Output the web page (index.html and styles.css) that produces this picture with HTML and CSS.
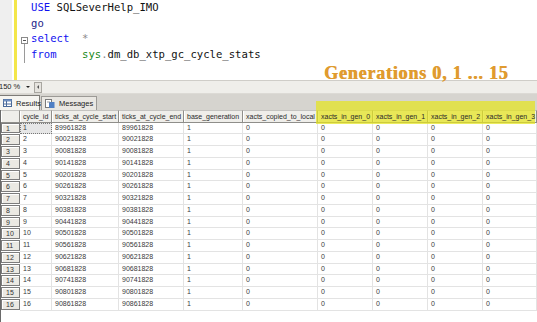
FILE: index.html
```html
<!DOCTYPE html>
<html lang="en">
<head>
    <meta charset="UTF-8">
    <title>dm_db_xtp_gc_cycle_stats</title>
    <link rel="stylesheet" href="styles.css">
</head>
<body>
    <div class="screen">
        <div class="editor">
            <div class="gutter"></div>
            <div class="changebar"></div>
            <div class="fold">
                <div class="fold-box"></div>
                <div class="fold-line"></div>
            </div>
<pre class="code"><span class="kw">USE</span> SQLSeverHelp_IMO
<span class="go">go</span>
<span class="kw">select</span>  <span class="op">*</span>
<span class="kw">from</span>    <span class="sys">sys</span><span class="op">.</span>dm_db_xtp_gc_cycle_stats</pre>
            <div class="note">Generations 0, 1 ... 15</div>
        </div>

        <div class="zoombar">
            <div class="zoom-combo">150 %<span class="arrow"></span></div>
            <div class="scroll-btn"><span class="tri"></span></div>
        </div>

        <div class="tabs">
            <div class="tab active">
                <svg width="9" height="8" viewBox="0 0 9 8">
                    <rect x="0.5" y="0.5" width="8" height="7" fill="#fff" stroke="#4a6a9a"/>
                    <rect x="0.5" y="0.5" width="8" height="2" fill="#6f8fc0"/>
                    <line x1="3.5" y1="2" x2="3.5" y2="8" stroke="#4a6a9a"/>
                    <line x1="0" y1="5" x2="9" y2="5" stroke="#4a6a9a"/>
                </svg>
                Results
            </div>
            <div class="tab">
                <svg width="10" height="9" viewBox="0 0 10 9">
                    <rect x="0.5" y="0.5" width="6" height="8" fill="#fff" stroke="#7a7a7a"/>
                    <rect x="4" y="3" width="5.5" height="6" fill="#4f7fc4"/>
                    <line x1="2" y1="3" x2="5" y2="3" stroke="#9a9a9a"/>
                </svg>
                Messages
            </div>
        </div>

        <div class="grid" id="grid">
            <div class="row head">
                <div class="cell"></div>
                <div class="cell"><span>cycle_id</span></div>
                <div class="cell"><span>ticks_at_cycle_start</span></div>
                <div class="cell"><span>ticks_at_cycle_end</span></div>
                <div class="cell"><span>base_generation</span></div>
                <div class="cell"><span>xacts_copied_to_local</span></div>
                <div class="cell"><span>xacts_in_gen_0</span></div>
                <div class="cell"><span>xacts_in_gen_1</span></div>
                <div class="cell"><span>xacts_in_gen_2</span></div>
                <div class="cell"><span>xacts_in_gen_3</span></div>
            </div>
        </div>

        <div class="highlight"></div>
    </div>

    <script>
        const grid = document.getElementById('grid');

        for (let i = 1; i <= 16; i++) {
            const ticks = 89961828 + (i - 1) * 60000;
            const row = document.createElement('div');
            row.className = 'row';
            row.innerHTML = `
                <div class="cell rowhead"><span class="btn">${i}</span></div>
                <div class="cell${i === 1 ? ' current' : ''}">${i}</div>
                <div class="cell">${ticks}</div>
                <div class="cell">${ticks}</div>
                <div class="cell">1</div>
                <div class="cell">0</div>
                <div class="cell">0</div>
                <div class="cell">0</div>
                <div class="cell">0</div>
                <div class="cell">0</div>
            `;
            grid.appendChild(row);
        }
    </script>
</body>
</html>
```

FILE: styles.css
```css
body {
    margin: 0;
    background: #fff;
}
.screen {
    position: relative;
    width: 537px;
    height: 322px;
    overflow: hidden;
}
.editor {
    position: relative;
    display: flex;
    height: 80px;
    background: #fff;
}
.gutter {
    width: 12px;
    background: #efefef;
    margin-right: 2px;
}
.changebar {
    width: 3px;
    background: #f3e64a;
}
.fold {
    width: 14px;
    padding-top: 37px;
    box-sizing: border-box;
}
.fold-box {
    position: relative;
    width: 5px;
    height: 5px;
    margin-left: 4px;
    border: 1px solid #8a8a8a;
    background: #fff;
}
.fold-box::after {
    content: "";
    position: absolute;
    left: 1px;
    top: 2px;
    width: 3px;
    height: 1px;
    background: #555;
}
.fold-line {
    width: 1px;
    height: 19px;
    margin-left: 7px;
    background: #9a9a9a;
}
.code {
    margin: 0;
    font-family: "DejaVu Sans Mono", "Liberation Mono", monospace;
    font-size: 10.6px;
    line-height: 15.5px;
    color: #111;
}
.kw {
    color: #1010f0;
}
.go {
    color: #24248a;
}
.op {
    color: #8a8a8a;
}
.sys {
    color: #1a8a1a;
}
.note {
    position: absolute;
    left: 324px;
    top: 64px;
    font-family: "Liberation Serif", serif;
    font-weight: bold;
    font-size: 18px;
    line-height: 18px;
    letter-spacing: 0.8px;
    color: #e09b2f;
    text-shadow: 0.6px 0 0 #e09b2f;
}
.zoombar {
    display: flex;
    align-items: center;
    gap: 3px;
    height: 12px;
    background: #efeeea;
    border-top: 1px solid #cfcdc8;
    border-bottom: 1px solid #dcdad5;
}
.zoom-combo {
    position: relative;
    width: 31px;
    height: 10px;
    font-family: "Liberation Sans", sans-serif;
    font-size: 7.5px;
    line-height: 10px;
    color: #222;
    text-indent: -1px;
}
.arrow {
    position: absolute;
    right: 1px;
    top: 4px;
    border-left: 2px solid transparent;
    border-right: 2px solid transparent;
    border-top: 2px solid #222;
}
.scroll-btn {
    width: 6px;
    height: 9px;
    border: 1px solid #a8a6a0;
    background: #e6e4df;
    display: flex;
    align-items: center;
    justify-content: center;
}
.tri {
    border-top: 2px solid transparent;
    border-bottom: 2px solid transparent;
    border-right: 2px solid #555;
}
.tabs {
    display: flex;
    align-items: flex-end;
    gap: 1px;
    height: 16px;
    background: #d6d4cf;
}
.tab {
    display: flex;
    align-items: center;
    gap: 4px;
    height: 14px;
    padding: 0 3px;
    box-sizing: border-box;
    font-family: "Liberation Sans", sans-serif;
    font-size: 7.5px;
    color: #222;
    background: #e9e7e2;
    border: 1px solid #9c9a96;
    border-bottom: none;
}
.tab.active {
    width: 40px;
    height: 15px;
    background: #f6f5f1;
    border-left: none;
    border-color: #7e7c78;
}
.tab svg {
    flex: none;
}
.grid {
    height: 213px;
    border-left: 1px solid #6a6a6a;
    background: #fff;
}
.row {
    display: grid;
    grid-template-columns: 19px 32px 67px 65px 59px 75px 55px 55px 55px 54px;
    height: 11.75px;
}
.cell {
    box-sizing: border-box;
    padding-left: 3px;
    border-right: 1px solid #e3e3e3;
    border-bottom: 1px solid #e3e3e3;
    font-family: "Liberation Sans", sans-serif;
    font-size: 7px;
    line-height: 10.75px;
    color: #3a3a3a;
    white-space: nowrap;
    overflow: hidden;
}
.row.head {
    height: 12.5px;
}
.row.head .cell {
    line-height: 11.5px;
    color: #2a2a2a;
    background: #efeeea;
    border-top: 1px solid #c4c3c0;
    border-right: 1px solid #8f8e8a;
    border-bottom: 1px solid #8f8e8a;
    box-shadow: inset 1px 0 #fff;
}
.row.head .cell span {
    position: relative;
    z-index: 2;
}
.cell.current {
    background: #e6e6e6;
    outline: 1px dotted #777;
    outline-offset: -1px;
}
.cell.rowhead {
    padding: 0 0 1px 0;
    border: none;
}
.btn {
    display: block;
    height: 100%;
    box-sizing: border-box;
    padding-left: 4px;
    line-height: 9px;
    color: #333;
    background: #ebe9e3;
    border: 1px solid #7c7c7c;
    box-shadow: inset 1px 1px #fff;
}
.highlight {
    position: absolute;
    z-index: 1;
    left: 316px;
    top: 101px;
    width: 219px;
    height: 23px;
    background: rgba(228, 228, 30, 0.72);
}
```
